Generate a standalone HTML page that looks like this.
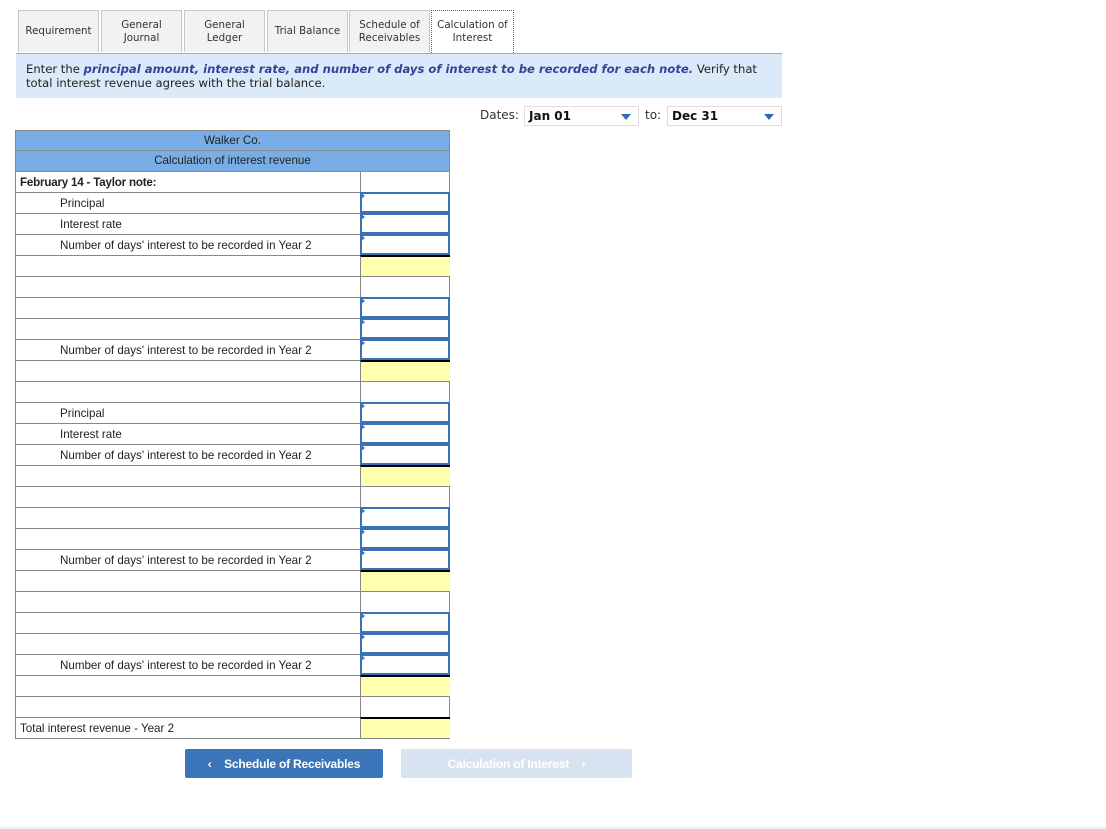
<!DOCTYPE html>
<html><head><style>
body{margin:0;width:1106px;height:829px;background:#fff;position:relative;font-family:"Liberation Sans",Arial,sans-serif;overflow:hidden}
.tab{position:absolute;top:10px;height:42px;background:#f2f2f2;border:1px solid #c8c8c8;border-bottom:none;box-sizing:border-box;font-family:"DejaVu Sans",sans-serif;font-size:10.3px;color:#333;display:flex;align-items:center;justify-content:center;text-align:center;line-height:13px}
.tab.act{background:#fff;border:1px dotted #3a6fb5;border-bottom:none;height:43px}
.instr{position:absolute;left:16px;top:53px;width:766px;height:45px;background:#dbeaf8;border-top:1px solid #aaa;box-sizing:border-box;padding:8px 10px;font-family:"DejaVu Sans",sans-serif;font-size:11.6px;line-height:14px;color:#222}
.instr i{color:#3a3f9a;font-weight:bold}
.sel{position:absolute;top:106px;height:20px;border:1px solid #ddd;box-sizing:border-box;font-family:"DejaVu Sans",sans-serif;font-weight:bold;font-size:12px;padding:2px 4px;color:#111}
.sel:after{content:"";position:absolute;right:7px;top:7px;border-left:5px solid transparent;border-right:5px solid transparent;border-top:6px solid #2d6bb5}
.lbl{position:absolute;top:108px;font-family:"DejaVu Sans",sans-serif;font-size:12px;color:#333}
.row{position:absolute;left:15px;width:435px;height:21px;box-sizing:border-box;border:1px solid #888;border-top:none;font-size:11.6px;color:#222}
.row .t{position:absolute;top:4px;left:4px}
.row .t.in{left:44px}
.row .t.b{font-weight:bold;letter-spacing:-0.2px}
.row .v{position:absolute;left:344px;top:-1px;width:90px;height:21px;box-sizing:border-box;border-left:1px solid #888;border-top:1px solid #888}
.v.inp{border:2px solid #3a72b6;background:#fff}
.v.inp:before{content:"";position:absolute;left:-1px;top:-1px;border-top:3px solid transparent;border-bottom:3px solid transparent;border-left:4px solid #3a72b6}
.v.y{background:#ffffad;border-top:2px solid #000}
.hd{position:absolute;left:15px;width:435px;height:21px;background:#78aee5;border:1px solid #888;box-sizing:border-box;text-align:center;font-size:11.6px;line-height:20px;color:#222}
.btn{position:absolute;top:749px;height:29px;font-weight:bold;font-size:12px;color:#fff;display:flex;align-items:center;justify-content:center;border-radius:2px;letter-spacing:-0.2px}
</style></head><body>
<div class="tab" style="left:18px;width:81px">Requirement</div>
<div class="tab" style="left:101px;width:81px">General<br>Journal</div>
<div class="tab" style="left:184px;width:81px">General<br>Ledger</div>
<div class="tab" style="left:267px;width:81px">Trial Balance</div>
<div class="tab" style="left:349px;width:81px">Schedule of<br>Receivables</div>
<div class="tab act" style="left:431px;width:83px">Calculation of<br>Interest</div>
<div class="instr">Enter the <i>principal amount, interest rate, and number of days of interest to be recorded for each note.</i> Verify that total interest revenue agrees with the trial balance.</div>
<div class="lbl" style="left:480px">Dates:</div>
<div class="sel" style="left:524px;width:115px">Jan 01</div>
<div class="lbl" style="left:645px">to:</div>
<div class="sel" style="left:667px;width:115px">Dec 31</div>
<div class="hd" style="top:130px">Walker Co.</div>
<div class="hd" style="top:151px;border-top:none">Calculation of interest revenue</div>
<div id="rows"></div>
<div class="btn" style="left:185px;width:198px;background:#3a74b9">‹&nbsp;&nbsp;&nbsp; Schedule of Receivables</div>
<div class="btn" style="left:401px;width:231px;background:#d7e3f0">Calculation of Interest &nbsp;&nbsp;&nbsp;›</div>
<div style="position:absolute;left:0;top:827px;width:1106px;height:2px;background:#eef1f5"></div>
<script>
var N="Number of days' interest to be recorded in Year 2";
var R=[["February 14 - Taylor note:","p",2],["Principal","i",1],["Interest rate","i",1],[N,"i",1],["","y"],["","p"],["","i"],["","i"],[N,"i",1],["","y"],["","p"],["Principal","i",1],["Interest rate","i",1],[N,"i",1],["","y"],["","p"],["","i"],["","i"],[N,"i",1],["","y"],["","p"],["","i"],["","i"],[N,"i",1],["","y"],["","p"],["Total interest revenue - Year 2","y",0]];
var h="";R.forEach(function(r,k){var top=172+21*k;var c=r[1]=="i"?"v inp":r[1]=="y"?"v y":"v";h+='<div class="row" style="top:'+top+'px"><span class="t'+(r[2]==1?' in':r[2]==2?' b':'')+'">'+r[0]+'</span><div class="'+c+'"></div></div>';});
document.getElementById("rows").innerHTML=h;
</script>
</body></html>
